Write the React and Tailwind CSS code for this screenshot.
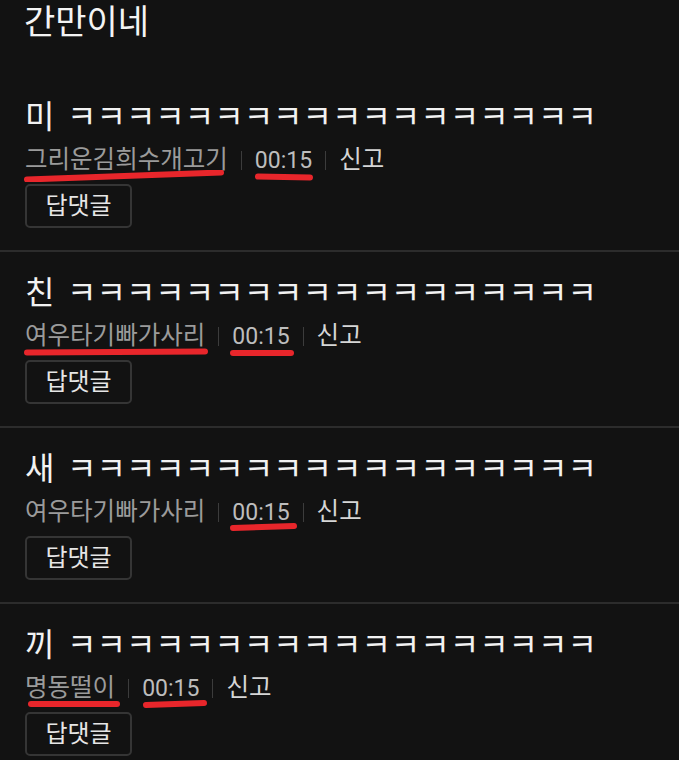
import React from "react";

const FONT = { fontFamily: 'Roboto, "Noto Sans CJK KR", "Noto Sans", sans-serif' };

// hand-drawn red marker stroke under a piece of text
function Marker({ width, tilt = 0, className = "" }) {
  const h = 12;
  const mid = h / 2;
  return (
    <svg
      width={width}
      height={h}
      viewBox={`0 0 ${width} ${h}`}
      className={`pointer-events-none absolute ${className}`}
    >
      <path
        d={`M3 ${mid + tilt / 2} L${width - 3} ${mid - tilt / 2}`}
        stroke="#e8262b"
        strokeWidth="6"
        strokeLinecap="round"
        fill="none"
      />
    </svg>
  );
}

function Sep() {
  return <span className="mx-[13px] inline-block h-[19px] w-[1px] bg-[#3c3c3c]" />;
}

function Comment({ first, user, userMark, timeMark, divider = true }) {
  return (
    <div className={divider ? "border-b-2 border-[#2c2c2c]" : ""}>
      <div className="pb-[22px] pl-[25px] pt-[21px]">
        <div className="flex h-[40px] items-center text-[32px] leading-none text-[#f2f2f2]">
          <span className="w-[42px]">{first}</span>
          <span>ㅋㅋㅋㅋㅋㅋㅋㅋㅋㅋㅋㅋㅋㅋㅋㅋㅋㅋ</span>
        </div>
        <div className="mt-[8px] flex h-[30px] items-center leading-none">
          <span className="relative text-[24.5px] text-[#9b9b9b]">
            {user}
            {userMark && <Marker width={userMark.w} tilt={userMark.tilt} className={userMark.cls} />}
          </span>
          <Sep />
          <span className="relative text-[23px] text-[#bdbdbd]">
            00:15
            {timeMark && <Marker width={timeMark.w} tilt={timeMark.tilt} className={timeMark.cls} />}
          </span>
          <Sep />
          <span className="text-[24.5px] text-[#d6d6d6]">신고</span>
        </div>
        <button className="mt-[9px] flex h-[44px] w-[107px] items-center justify-center rounded-[5px] border-2 border-[#353535] text-[24px] leading-none text-[#e6e6e6]">
          답댓글
        </button>
      </div>
    </div>
  );
}

export default function App() {
  return (
    <div className="min-h-[760px] w-[679px] overflow-hidden bg-[#121212]" style={FONT}>
      <div className="h-[76px] pl-[24px] pt-[1px]">
        <h1 className="text-[34px] font-normal leading-[42px] text-[#f4f4f4]">간만이네</h1>
      </div>
      <Comment
        first="미"
        user="그리운김희수개고기"
        userMark={{ w: 200, tilt: 7, cls: "left-[-1px] top-[22px]" }}
        timeMark={{ w: 58, tilt: -1, cls: "left-[0px] top-[22px]" }}
      />
      <Comment
        first="친"
        user="여우타기빠가사리"
        userMark={{ w: 184, tilt: 1, cls: "left-[-1px] top-[22px]" }}
        timeMark={{ w: 64, tilt: 0, cls: "left-[-2px] top-[22px]" }}
      />
      <Comment
        first="새"
        user="여우타기빠가사리"
        timeMark={{ w: 67, tilt: 2, cls: "left-[-2px] top-[20px]" }}
      />
      <Comment
        first="끼"
        user="명동떨이"
        userMark={{ w: 92, tilt: 0, cls: "left-[3px] top-[22px]" }}
        timeMark={{ w: 64, tilt: 2, cls: "left-[1px] top-[21px]" }}
        divider={false}
      />
    </div>
  );
}
